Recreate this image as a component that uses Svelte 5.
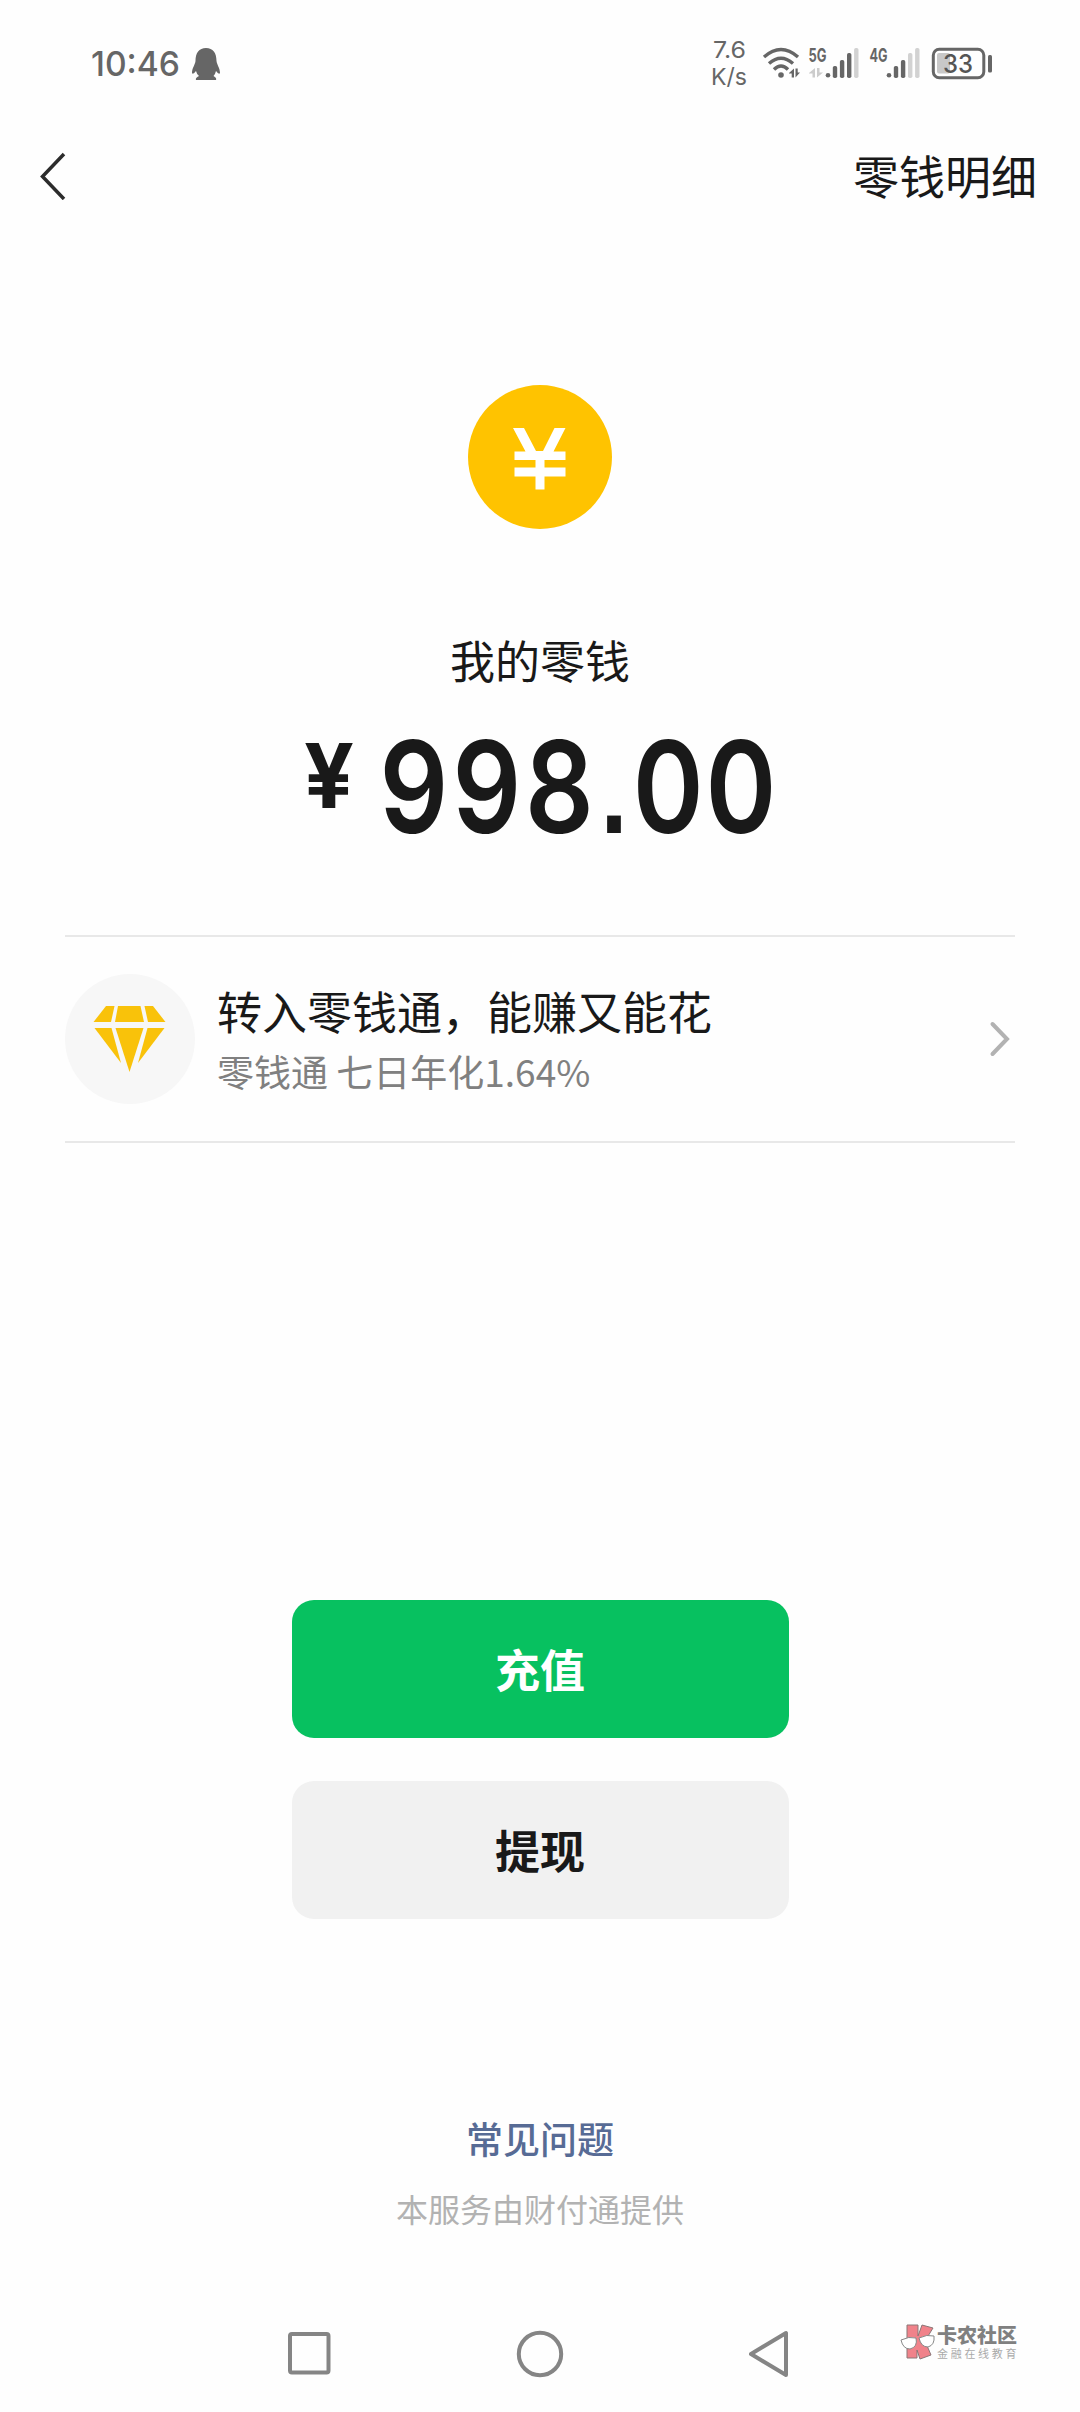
<script>
  const signals = [
    { label: '5G', x: 808.5, dot: 828, active: 3, arrows: true },
    { label: '4G', x: 869.5, dot: 889, active: 2, arrows: false }
  ];
  const barTops = [66, 60, 53, 48];
</script>

<div class="screen">
  <header class="status">
    <div class="clock">
      <svg class="time" viewBox="90 40 92 46" width="92" height="46">
        <text x="91" y="75.500" textLength="89" lengthAdjust="spacingAndGlyphs">10:46</text>
      </svg>
      <svg viewBox="190 46 32 36" width="32" height="36" fill="#666">
        <path d="M206 48C199 48 195.500 53 195.500 61C195 65 192 68 192 73Q193 75 196 71Q197 75 199 76Q195 78 196 80H216Q217 78 213.500 76Q215 75 216 71Q219 75 220 73C220 68 217 65 216.500 61C216.500 53 213 48 206 48Z" />
      </svg>
    </div>
    <svg class="indicators" viewBox="710 30 290 70" width="290" height="70">
      <g class="speed">
        <text x="713" y="58" textLength="33" lengthAdjust="spacingAndGlyphs">7.6</text>
        <text x="711" y="84.500" textLength="36" lengthAdjust="spacingAndGlyphs">K/s</text>
      </g>
      <g fill="none" stroke="#666" stroke-width="3.400">
        <path d="M764 57Q781 42 798 57" />
        <path d="M769 63.500Q781 53 793 63.500" />
        <path d="M774 69.500Q781 62.500 788 69.500" />
      </g>
      <circle cx="781" cy="75" r="2.800" fill="#666" />
      <path d="M789 73L794 68.500V77.500H791.700V73.500H789ZM795.500 68.500H797.700V72.500H800L795.500 77.500Z" fill="#666" />
      {#each signals as s}
        <text class="net" x={s.x} y="61.500" textLength="18" lengthAdjust="spacingAndGlyphs">{s.label}</text>
        {#if s.arrows}
          <path d="M809 73L815 68V77.500H812.500V73.500H809ZM817 68H819.500V72.500H823L817 77.500Z" fill="#ccc" />
        {/if}
        <circle cx={s.dot} cy="75.200" r="2.300" fill="#666" />
        {#each barTops as top, i}
          <rect x={s.dot + 4.8 + i * 7.1} y={top} width="4.400" height={78 - top} rx="1.800" fill={i < s.active ? '#666' : '#d2d2d2'} />
        {/each}
      {/each}
      <rect x="937" y="53" width="13" height="20.500" rx="2" fill="#c8c8c8" />
      <rect x="933.300" y="49.300" width="50.500" height="28.500" rx="6" fill="none" stroke="#666" stroke-width="3" />
      <rect x="988" y="55" width="4" height="17.500" rx="1.500" fill="#666" />
      <text class="level" x="943" y="72.500" textLength="30" lengthAdjust="spacingAndGlyphs">33</text>
    </svg>
  </header>

  <nav class="topbar">
    <svg viewBox="0 0 28 48" width="28" height="48" fill="none" stroke="#2c2c2c" stroke-width="3.500">
      <path d="M25 2L3.500 24.500L25 47" />
    </svg>
    <span>零钱明细</span>
  </nav>

  <main>
    <svg class="coin" viewBox="0 0 144 144" width="144" height="144">
      <circle cx="72" cy="72" r="72" fill="#ffc300" />
      <path d="M46 43H57L69 66H76L87.500 43H98.500L86.500 66.500H98.500V75H77.500V82.500H98.500V91.500H77.500V104.500H68.500V91.500H47.500V82.500H68.500V75H47.500V66.500H58.500Z" fill="#fff" transform="translate(-1 0)" />
    </svg>
    <h1>我的零钱</h1>
    <svg class="amount" viewBox="290 690 500 190" width="500" height="190">
      <text class="yen" x="304" y="808" textLength="50" lengthAdjust="spacingAndGlyphs">¥</text>
      <text class="value" x="492.600 579.500 666.100 731 795.600 882" y="833" transform="scale(.84 1)">998<tspan class="point">.</tspan>00</text>
    </svg>

    <section class="promo">
      <svg viewBox="0 0 130 130" width="130" height="130">
        <circle cx="65" cy="65" r="65" fill="#f7f7f7" />
        <g fill="#f9c20a">
          <path d="M41 32H49.500L46 48H28.500Z" />
          <path d="M53 32H75.500L79 48H50Z" />
          <path d="M79.500 32H88L100.500 48H83Z" />
          <path d="M29.500 54H46.500L56 89Z" />
          <path d="M50.500 54H78.500L64.500 98Z" />
          <path d="M82.500 54H99.500L73 89Z" />
        </g>
      </svg>
      <div class="copy">
        <strong>转入零钱通，能赚又能花</strong>
        <span>零钱通 七日年化1.64%</span>
      </div>
      <svg class="arrow" viewBox="0 0 22 38" width="22" height="38" fill="none" stroke="#b2b2b2" stroke-width="4" stroke-linecap="round">
        <path d="M3.500 4L18 19L3.500 34" />
      </svg>
    </section>

    <div class="actions">
      <button class="primary">充值</button>
      <button>提现</button>
    </div>
    <a class="faq" href="#faq">常见问题</a>
    <p>本服务由财付通提供</p>
  </main>

  <footer>
    <svg viewBox="0 0 46 50" width="46" height="50"><rect x="5" y="5" width="38.500" height="38.500" rx="2" /></svg>
    <svg viewBox="0 0 50 50" width="50" height="50"><circle cx="25" cy="25" r="21.200" /></svg>
    <svg viewBox="0 0 46 50" width="46" height="50" stroke-linejoin="round"><path d="M2 25L37 4V46Z" /></svg>
    <div class="brand">
      <svg viewBox="0 0 36 36" width="36" height="36">
        <g fill="#f0828a" stroke="#8b7777" stroke-width="1">
          <path d="M7 1H18V12L22 1L33 4L25 17L31 31L20 35L17 26V34H7Z" />
        </g>
        <g fill="#fff" stroke="#888" stroke-width="1">
          <path d="M1 16Q9 12 16 14Q18 23 10 25Q3 25 1 16ZM19 14Q27 10 34 12Q35 21 28 23Q21 23 19 14Z" />
        </g>
      </svg>
      <div><b>卡农社区</b><small>金融在线教育</small></div>
    </div>
  </footer>
</div>

<style>
  :global(body) {
    margin: 0;
    background: #fefefe;
  }
  .screen {
    width: 1080px;
    height: 2412px;
    display: flex;
    flex-direction: column;
    overflow: hidden;
    background: #fefefe;
    color: #191919;
    font-family: 'Noto Sans CJK SC', sans-serif;
  }
  svg {
    display: block;
    flex: none;
  }
  .status {
    height: 100px;
    padding: 30px 80px 0 90px;
    box-sizing: border-box;
    display: flex;
    justify-content: space-between;
  }
  .clock {
    display: flex;
    gap: 8px;
    padding-top: 10px;
  }
  .clock svg:last-child {
    margin-top: 6px;
  }
  .status text {
    font-family: Inter, sans-serif;
    fill: #666;
  }
  .time text {
    font-size: 34.500px;
    font-weight: 500;
  }
  .speed text {
    font-size: 23px;
    font-weight: 400;
  }
  .status .net {
    font-size: 19px;
    font-weight: 700;
  }
  .status .level {
    font-size: 26px;
    font-weight: 500;
    fill: #555;
  }
  .topbar {
    height: 152px;
    box-sizing: border-box;
    padding: 0 43px 0 39px;
    display: flex;
    align-items: center;
    justify-content: space-between;
    font-size: 46px;
    line-height: 60px;
  }
  .topbar span {
    padding-bottom: 4px;
  }
  main {
    display: flex;
    flex-direction: column;
    align-items: center;
    flex: 1;
  }
  .coin {
    margin-top: 133px;
  }
  h1 {
    margin: 101px 0 0;
    font-size: 45px;
    line-height: 60px;
    font-weight: 400;
  }
  .amount text {
    font-family: Inter, sans-serif;
    font-weight: 600;
    fill: #191919;
  }
  .amount .yen {
    font-size: 89px;
    font-weight: 700;
  }
  .amount .value {
    font-size: 128px;
    text-anchor: middle;
  }
  .amount .point {
    font-family: 'Liberation Sans', sans-serif;
    font-size: 116px;
    font-weight: 700;
  }
  .promo {
    width: 950px;
    height: 208px;
    box-sizing: border-box;
    margin-top: 55px;
    border: solid #e8e8e8;
    border-width: 2px 0;
    display: flex;
    align-items: center;
  }
  .copy {
    flex: 1;
    margin-left: 22px;
    padding-top: 3px;
    display: flex;
    flex-direction: column;
  }
  strong {
    font-size: 45px;
    line-height: 60px;
    font-weight: 400;
  }
  .copy span {
    font-size: 37px;
    line-height: 60px;
    color: #808080;
  }
  .arrow {
    margin-right: 4px;
  }
  .actions {
    margin-top: 457px;
    display: grid;
    gap: 43px;
  }
  button {
    width: 497px;
    height: 138px;
    padding: 0;
    border: 0;
    border-radius: 22px;
    background: #f1f1f1;
    color: #191919;
    font: 700 45px/60px 'Noto Sans CJK SC', sans-serif;
  }
  .primary {
    background: #07c160;
    color: #fff;
  }
  .faq {
    margin-top: 193px;
    font-size: 37px;
    line-height: 52px;
    font-weight: 500;
    color: #576b95;
    text-decoration: none;
  }
  p {
    margin: 21px 0 0;
    font-size: 32px;
    line-height: 46px;
    color: #b2b2b2;
  }
  footer {
    height: 110px;
    display: grid;
    grid-template-columns: 46px 50px 46px 1fr;
    column-gap: 184px;
    padding: 27px 0 0 285px;
    align-items: start;
    box-sizing: border-box;
    fill: none;
    stroke: #858585;
    stroke-width: 4;
  }
  .brand {
    display: flex;
    gap: 1px;
    margin-left: -79px;
    margin-top: -5px;
  }
  .brand div {
    display: flex;
    flex-direction: column;
  }
  b {
    font-size: 20px;
    line-height: 22px;
    color: #808080;
    font-weight: 900;
  }
  small {
    margin-top: 1px;
    font-size: 11px;
    line-height: 12px;
    letter-spacing: 2.700px;
    color: #aaa;
    white-space: nowrap;
  }
</style>
